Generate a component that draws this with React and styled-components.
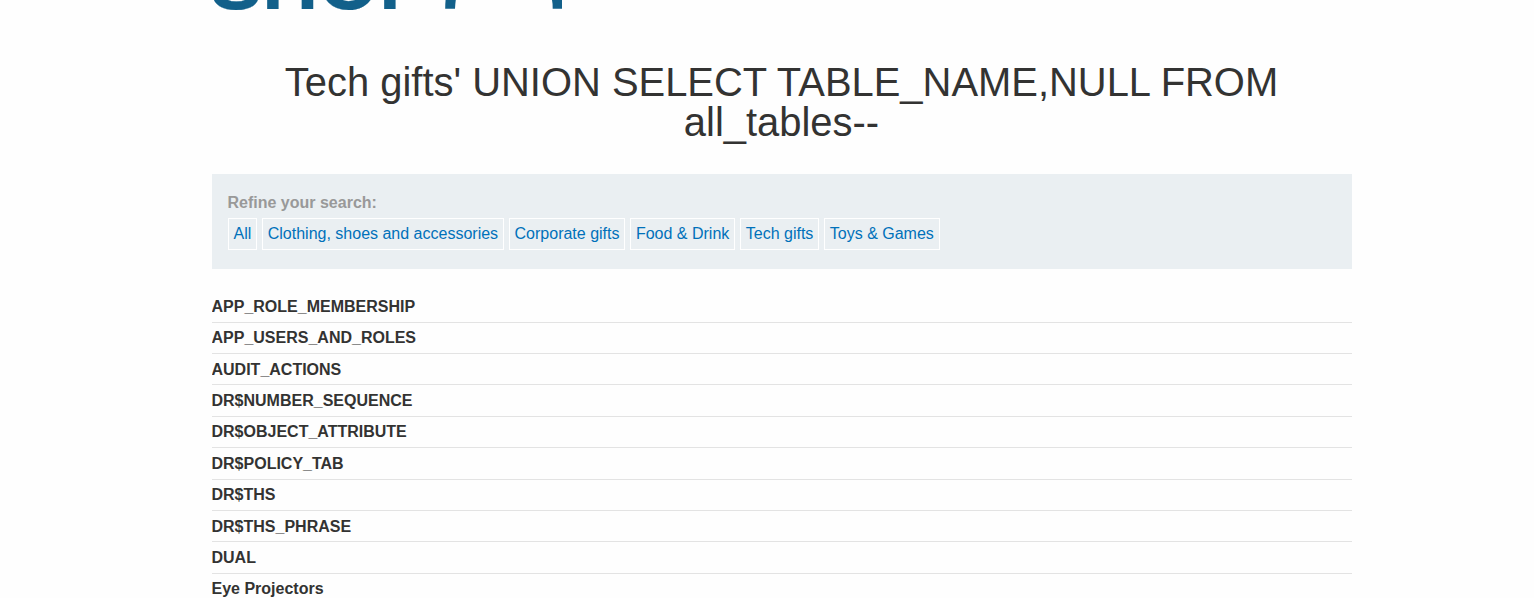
import React from "react";
import styled, { createGlobalStyle } from "styled-components";

const GlobalStyle = createGlobalStyle`
  * { box-sizing: border-box; }
  body {
    margin: 0;
    background: #fefefe;
    color: #333332;
    font-family: "Liberation Sans", Arial, sans-serif;
    font-size: 16px;
    overflow: hidden;
  }
`;

const Page = styled.main`
  width: 1140px;
  height: 598px;
  margin-left: 211.5px;
  overflow: hidden;
`;

const Logo = styled.header`
  height: 16px;
  display: flex;
  align-items: flex-end;
  color: #12608a;
`;

const LogoWord = styled.span`
  width: 231px;
  margin: 0 0 -11px -1.5px;
  font-size: 78px;
  line-height: 90px;
  font-weight: 700;
  -webkit-text-stroke: 0.2px currentColor;
`;

const Hanger = styled.svg`
  display: block;
  width: 124px;
  height: 16px;
`;

const Title = styled.h1`
  margin: 46px 0 32px;
  font-size: 39.94px;
  line-height: 40px;
  font-weight: 400;
  text-align: center;
`;

const Filters = styled.section`
  height: 95px;
  padding: 16px;
  background: #eaeff2;
`;

const FilterLabel = styled.div`
  margin-top: 2px;
  color: #999;
  font-weight: 700;
  line-height: 22px;
`;

const FilterList = styled.nav`
  display: flex;
  gap: 4.46px;
  margin-top: 4px;
`;

const FilterLink = styled.a`
  height: 32px;
  padding: 0 5px;
  border: 1px solid #fff;
  color: #0071ba;
  line-height: 30px;
  white-space: nowrap;
`;

const Results = styled.ul`
  margin: 21.2px 0 0;
  padding: 0;
  list-style: none;
`;

const ResultRow = styled.li`
  height: 31.4px;
  padding-top: 6.6px;
  line-height: 20px;
  font-weight: 700;

  & + & {
    border-top: 1px solid #e3e3e3;
    padding-top: 5.6px;
  }
`;

const categories = ["All", "Clothing, shoes and accessories", "Corporate gifts", "Food & Drink", "Tech gifts", "Toys & Games"];

const results = [
  "APP_ROLE_MEMBERSHIP",
  "APP_USERS_AND_ROLES",
  "AUDIT_ACTIONS",
  "DR$NUMBER_SEQUENCE",
  "DR$OBJECT_ATTRIBUTE",
  "DR$POLICY_TAB",
  "DR$THS",
  "DR$THS_PHRASE",
  "DUAL",
  "Eye Projectors",
];

export default function App() {
  return (
    <>
      <GlobalStyle />
      <Page>
        <Logo>
          <LogoWord>SHOP</LogoWord>
          <Hanger viewBox="0 0 124 16" fill="currentColor" aria-hidden="true">
            <path d="M4.6 0H14.8Q14.2 4 14 8.7H4.2Q4.2 4 4.6 0Z" />
            <path d="M111 0H121V8.7H111.7Q111.7 3 111 0Z" />
          </Hanger>
        </Logo>
        <Title>Tech gifts' UNION SELECT TABLE_NAME,NULL FROM all_tables--</Title>
        <Filters>
          <FilterLabel>Refine your search:</FilterLabel>
          <FilterList>
            {categories.map((name) => (
              <FilterLink key={name}>{name}</FilterLink>
            ))}
          </FilterList>
        </Filters>
        <Results>
          {results.map((name) => (
            <ResultRow key={name}>{name}</ResultRow>
          ))}
        </Results>
      </Page>
    </>
  );
}
